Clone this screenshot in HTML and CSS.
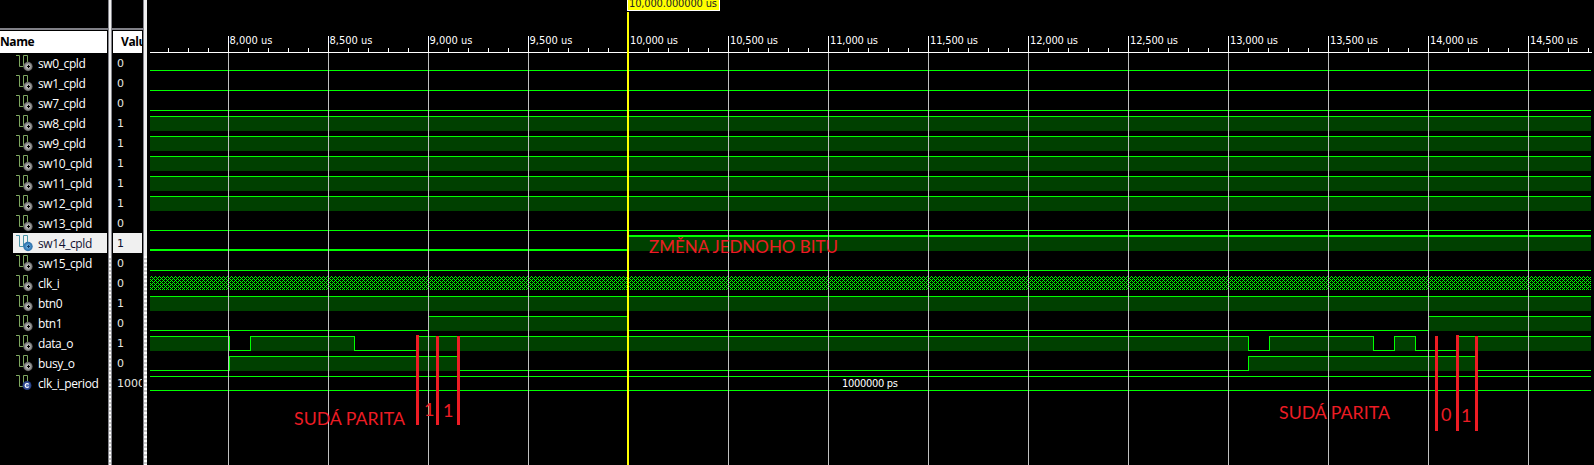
FILE: index.html
```html
<!DOCTYPE html>
<html lang="cs">
<head>
<meta charset="utf-8">
<title>Waveform</title>
<link rel="stylesheet" href="styles.css">
</head>
<body>
<svg width="0" height="0" class="defs">
  <defs>
    <symbol id="wave" viewBox="0 0 18 18"><path d="M1 1.5H4.500V12.500H8.500V1.500H12.500V8" fill="none" stroke="currentColor"/></symbol>
    <radialGradient id="gray"><stop offset="0" stop-color="#ddd"/><stop offset=".6" stop-color="#999"/><stop offset="1" stop-color="#555"/></radialGradient>
    <radialGradient id="blue"><stop offset="0" stop-color="#8fc4ea"/><stop offset=".6" stop-color="#3f86c0"/><stop offset="1" stop-color="#2c6ba5"/></radialGradient>
    <radialGradient id="navy"><stop offset="0" stop-color="#5f7fc8"/><stop offset="1" stop-color="#1d3578"/></radialGradient>
    <symbol id="sig" viewBox="0 0 18 18"><use href="#wave" width="18" height="18"/><circle cx="13" cy="12.500" r="4.700" fill="url(#gray)"/><path d="M12 12.500h3M13.500 11v3" stroke="#000"/></symbol>
    <symbol id="sigsel" viewBox="0 0 18 18"><use href="#wave" width="18" height="18"/><circle cx="13" cy="12.500" r="4.700" fill="url(#blue)"/><path d="M12 12.500h3M13.500 11v3" stroke="#123f70"/></symbol>
    <symbol id="const" viewBox="0 0 18 18"><use href="#wave" width="18" height="18"/><circle cx="12" cy="11.500" r="4.500" fill="url(#navy)"/><path d="M13.800 10.300Q13 9.500 12 9.500Q10.200 9.700 10.200 11.500T12 13.500Q13 13.500 13.800 12.700" fill="none" stroke="#fff" stroke-width="1.200"/></symbol>
  </defs>
</svg>
<main class="viewer">
  <section class="names">
    <div class="top"></div>
    <h2 class="head">Name</h2>
    <ul class="list">
      <li><svg><use href="#sig"/></svg><span>sw0_cpld</span></li>
      <li><svg><use href="#sig"/></svg><span>sw1_cpld</span></li>
      <li><svg><use href="#sig"/></svg><span>sw7_cpld</span></li>
      <li><svg><use href="#sig"/></svg><span>sw8_cpld</span></li>
      <li><svg><use href="#sig"/></svg><span>sw9_cpld</span></li>
      <li><svg><use href="#sig"/></svg><span>sw10_cpld</span></li>
      <li><svg><use href="#sig"/></svg><span>sw11_cpld</span></li>
      <li><svg><use href="#sig"/></svg><span>sw12_cpld</span></li>
      <li><svg><use href="#sig"/></svg><span>sw13_cpld</span></li>
      <li class="selected"><svg><use href="#sigsel"/></svg><span>sw14_cpld</span></li>
      <li><svg><use href="#sig"/></svg><span>sw15_cpld</span></li>
      <li><svg><use href="#sig"/></svg><span>clk_i</span></li>
      <li><svg><use href="#sig"/></svg><span>btn0</span></li>
      <li><svg><use href="#sig"/></svg><span>btn1</span></li>
      <li><svg><use href="#sig"/></svg><span>data_o</span></li>
      <li><svg><use href="#sig"/></svg><span>busy_o</span></li>
      <li><svg><use href="#const"/></svg><span>clk_i_period</span></li>
    </ul>
  </section>
  <div class="splitter"></div>
  <section class="values">
    <div class="top"></div>
    <h2 class="head">Value</h2>
    <ul class="list">
      <li><span>0</span></li><li><span>0</span></li><li><span>0</span></li><li><span>1</span></li><li><span>1</span></li><li><span>1</span></li><li><span>1</span></li><li><span>1</span></li><li><span>0</span></li>
      <li class="selected"><span>1</span></li><li><span>0</span></li><li><span>0</span></li><li><span>1</span></li><li><span>0</span></li><li><span>1</span></li><li><span>0</span></li><li><span>1000</span></li>
    </ul>
  </section>
  <div class="splitter wide"></div>
  <svg class="waves" width="1447" height="465" viewBox="147 0 1447 465">
    <defs>
      <pattern id="dense" x="150" y="276" width="4" height="4" patternUnits="userSpaceOnUse">
        <path d="M1 0h1v1h-1zM0 1h1v1h-1zM2 1h1v1h-1zM3 2h1v1h-1zM0 3h1v1h-1zM2 3h1v1h-1z" fill="#00ff00"/>
      </pattern>
      <pattern id="ticks" x="168" y="48" width="20" height="5" patternUnits="userSpaceOnUse"><rect width="1" height="5" fill="#fff"/></pattern>
      <pattern id="grid" x="228" y="0" width="100" height="465" patternUnits="userSpaceOnUse">
        <rect y="36" width="1" height="17" fill="#fff"/><rect y="53" width="1" height="412" fill="#c0c0c0"/>
      </pattern>
    </defs>
    <!-- filled high levels -->
    <g class="high">
      <path d="M150 117H1591V131H150zM150 137H1591V151H150zM150 157H1591V171H150zM150 177H1591V191H150zM150 197H1591V211H150z"/>
      <path d="M628 237H1591V251H628zM150 297H1591V311H150zM428 317H628V331H428zM1428 317H1591V331H1428z"/>
      <path d="M150 337H229V351H150zM250 337H354V351H250zM417 337H1248V351H417zM1269 337H1373V351H1269zM1394 337H1415V351H1394zM1458 337H1591V351H1458z"/>
      <path d="M229 357H459V371H229zM1248 357H1477V371H1248z"/>
    </g>
    <!-- signal traces -->
    <g class="trace">
      <path d="M150 70.500H1591M150 90.500H1591M150 110.500H1591M150 116.500H1591M150 136.500H1591M150 156.500H1591M150 176.500H1591M150 196.500H1591M150 230.500H1591"/>
      <path class="bold" d="M150 250H628V236H1591"/>
      <path d="M150 270.500H1591M150 296.500H1591"/>
      <path d="M150 330.500H428.500V316.500H628.500V330.500H1428.500V316.500H1591"/>
      <path d="M150 336.500H229.500V350.500H250.500V336.500H354.500V350.500H417.500V336.500H1248.500V350.500H1269.500V336.500H1373.500V350.500H1394.500V336.500H1415.500V350.500H1458.500V336.500H1591"/>
      <path d="M150 370.500H229.500V356.500H459.500V370.500H1248.500V356.500H1477.500V370.500H1591"/>
      <path d="M150 376.500H1591M150 390.500H1591"/>
    </g>
    <rect x="150" y="276" width="1441" height="14" fill="url(#dense)"/>
    <!-- time ruler -->
    <rect x="150" y="48" width="1441" height="5" fill="url(#ticks)"/>
    <rect x="150" y="52" width="1442" height="1" fill="#fff"/>
    <rect x="150" width="1441" height="465" fill="url(#grid)"/>
    <g class="label">
      <text x="229.500" y="44" textLength="43">8,000 us</text>
      <text x="329.500" y="44" textLength="43">8,500 us</text>
      <text x="429.500" y="44" textLength="43">9,000 us</text>
      <text x="529.500" y="44" textLength="43">9,500 us</text>
      <text x="630" y="44" textLength="48">10,000 us</text>
      <text x="730" y="44" textLength="48">10,500 us</text>
      <text x="830" y="44" textLength="48">11,000 us</text>
      <text x="930" y="44" textLength="48">11,500 us</text>
      <text x="1030" y="44" textLength="48">12,000 us</text>
      <text x="1130" y="44" textLength="48">12,500 us</text>
      <text x="1230" y="44" textLength="48">13,000 us</text>
      <text x="1330" y="44" textLength="48">13,500 us</text>
      <text x="1430" y="44" textLength="48">14,000 us</text>
      <text x="1530" y="44" textLength="48">14,500 us</text>
      <text x="842" y="387" textLength="56">1000000 ps</text>
    </g>
    <!-- cursor -->
    <rect x="627" y="12" width="2" height="453" fill="#ff0"/>
    <rect x="627" y="-5" width="93" height="16" fill="#fff"/>
    <rect x="628" y="-4" width="91" height="14" fill="#ff0"/>
    <text class="label dark" x="629" y="7" textLength="88">10,000.000000 us</text>
    <!-- annotations -->
    <g class="mark">
      <path d="M416 335h3v90h-3zM436 336h3v89h-3zM457 336h3v89h-3zM1435 336h3v95h-3zM1456 335h3v96h-3zM1475 336h3v95h-3z"/>
      <text x="649" y="253" textLength="189" lengthAdjust="spacingAndGlyphs">ZMĚNA JEDNOHO BITU</text>
      <text x="294" y="425" textLength="111" lengthAdjust="spacingAndGlyphs">SUDÁ PARITA</text>
      <text x="424" y="416">1</text>
      <text x="443" y="417">1</text>
      <text x="1279" y="419" textLength="111" lengthAdjust="spacingAndGlyphs">SUDÁ PARITA</text>
      <text x="1441" y="421">0</text>
      <text x="1461" y="422">1</text>
    </g>
  </svg>
</main>
</body>
</html>
```
FILE: styles.css
```css
* { box-sizing: border-box; }
body { margin: 0; background: #000; color: #fff; overflow: hidden; }
.defs { position: absolute; }
.viewer { display: flex; width: 1594px; height: 465px; overflow: hidden; background: #000; }
.names { width: 108px; flex: none; font: 12px "Open Sans", sans-serif; }
.values { width: 31px; flex: none; overflow: hidden; font: 11px "DejaVu Sans", sans-serif; }
.top { height: 30px; border-bottom: 2px solid #808087; }
.head {
  height: 22px; margin: 1px 1px 0 0; overflow: hidden;
  background: #fff; color: #000; font: bold 12px/22px "Open Sans", sans-serif; letter-spacing: -0.4px;
}
.values .head { margin-left: 1px; padding-left: 8px; }
.list { list-style: none; margin: 0; padding: 0 1px 0 13px; }
.list li { display: flex; align-items: center; height: 20px; line-height: 18px; white-space: nowrap; padding-left: 2px; letter-spacing: -0.4px; }
.list span { padding-top: 2px; }
.list svg { width: 18px; height: 18px; margin-right: 5px; color: #7fa860; flex: none; }
.values .list { padding-left: 1px; }
.values .list li { padding-left: 4px; letter-spacing: 0; overflow: hidden; color: #e8e8e0; }
.list .selected, .values .list .selected { background: #f0f0f0; color: #101030; }
.selected svg { color: #4b95a8; }
.splitter {
  width: 4px; flex: none; border: solid #85858c; border-width: 0 1px;
  background: linear-gradient(#f0f0f0, #f0f0f0) 0 0 / 100% 256px no-repeat,
    repeating-linear-gradient(#fff 0 2px, #c8c8c8 2px 4px);
}
.splitter.wide { border-right: 0; }
.waves { flex: none; display: block; }
.high path { fill: #004000; }
.trace path { fill: none; stroke: #0f0; stroke-width: 1; shape-rendering: crispEdges; }
.trace .bold { stroke-width: 2; }
.label { font: 11px "DejaVu Sans Condensed", "DejaVu Sans", sans-serif; font-stretch: condensed; fill: #fff; }
.dark { fill: #222; }
.mark { fill: #ed1c24; font: 18px Lato, sans-serif; }
```
